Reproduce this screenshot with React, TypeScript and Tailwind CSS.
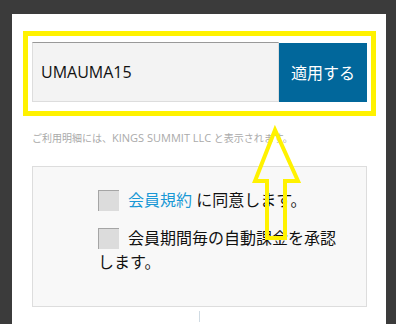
import React from "react";

export default function App() {
  return (
    <div className="relative w-[396px] h-[324px] overflow-hidden bg-[#3b3b3b] pt-[14px] pl-[12px] font-['Open_Sans','Noto_Sans_CJK_JP',sans-serif]">
      <div className="w-[374px] h-[310px] bg-white px-[20px] pt-[17px]">
        <div className="-ml-[9px] w-[353px] h-[85px] border-[5px] border-[#fff200] pt-[6px] pl-[4px]">
          <div className="flex items-start">
            <div className="w-[247px] h-[60px] bg-[#f3f3f3] border border-[#dddddd] border-t-[#999999] flex items-center pl-[8px] text-[16px] text-[#111111]">
              UMAUMA15
            </div>
            <div className="mt-[1px] w-[88px] h-[59px] bg-[#01679b] text-white text-[16px] flex items-center justify-center">
              適用する
            </div>
          </div>
        </div>
        <p className="mt-[15px] text-[10px] leading-[14px] text-[#aaaaaa] whitespace-nowrap">
          ご利用明細には、<span className="text-[11px]">KINGS SUMMIT LLC</span> と表示されます。
        </p>
        <div className="mt-[21px] w-[335px] h-[141px] border border-[#dddddd] bg-[#f8f8f8] pt-[21px] pl-[65px]">
          <div className="w-[245px] text-[16px] leading-[24px] text-[#111111]">
            <p>
              <span className="inline-block w-[21px] h-[21px] bg-[#dcdcdc] border-t border-l border-[#a5a5a5] align-middle mr-[9px] -mt-[3px]"></span>
              <span className="text-[#1a98d5]">会員規約</span> に同意します。
            </p>
            <p className="mt-[14px]">
              <span className="inline-block w-[21px] h-[21px] bg-[#dcdcdc] border-t border-l border-[#a5a5a5] align-middle mr-[9px] -mt-[3px]"></span>
              会員期間毎の自動課金を承認します。
            </p>
          </div>
        </div>
        <div className="mx-auto mt-[4px] w-[1px] h-[11px] bg-[#d0dbe3]"></div>
      </div>
      <svg className="absolute left-0 top-0" width="396" height="324" viewBox="0 0 396 324">
        <path
          d="M275 130 L255 181 L267 181 L267 238 L285 238 L285 181 L298 181 Z"
          fill="none"
          stroke="#fff200"
          strokeWidth="4"
          strokeLinejoin="miter"
        />
      </svg>
    </div>
  );
}
